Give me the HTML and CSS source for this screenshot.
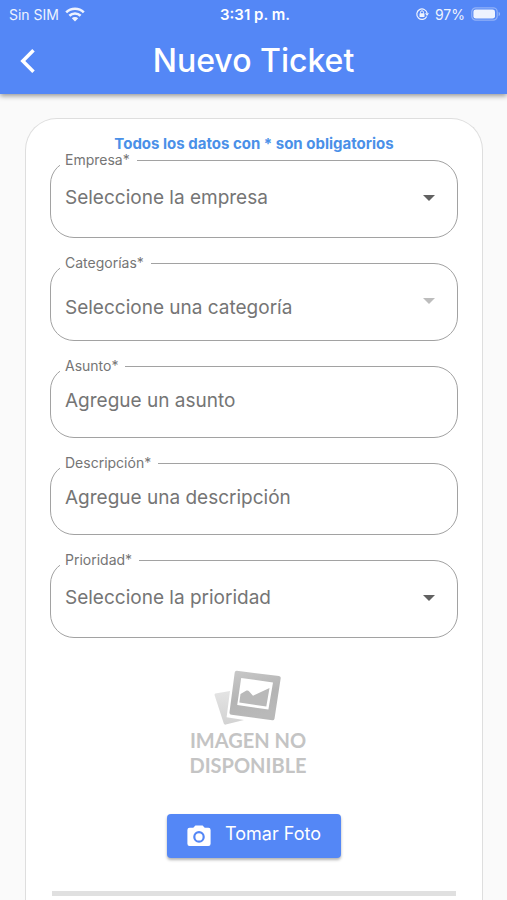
FILE: index.html
```html
<!DOCTYPE html>
<html lang="es">
<head>
<meta charset="utf-8">
<meta name="viewport" content="width=device-width, initial-scale=1">
<title>Nuevo Ticket</title>
<link rel="stylesheet" href="styles.css">
</head>
<body>
<header class="top">
  <div class="status">
    <div class="status-left">
      <span>Sin SIM</span>
      <svg class="wifi" viewBox="0 0 20 15" aria-hidden="true">
        <g fill="none" stroke="#fff" stroke-width="2.6">
          <path d="M1.200 5.400a12.600 12.600 0 0 1 17.600 0"/>
          <path d="M4.400 8.800a8 8 0 0 1 11.200 0"/>
        </g>
        <path d="M6.800 11.300a4.600 4.600 0 0 1 6.400 0L10 14.500z" fill="#fff"/>
      </svg>
    </div>
    <time class="clock">3:31 p. m.</time>
    <div class="status-right">
      <svg class="lock" viewBox="0 0 14 14" aria-hidden="true">
        <path d="M11.700 9.400a5.200 5.200 0 1 1 .4-3.200" fill="none" stroke="#fff" stroke-width="1.2"/>
        <path d="M10 6.200h4l-2 2.800z" fill="#fff"/>
        <rect x="4.500" y="6.300" width="5" height="3.800" rx=".6" fill="#fff"/>
        <path d="M5.500 6.500V5.300a1.500 1.500 0 0 1 3 0v1.200" fill="none" stroke="#fff"/>
      </svg>
      <span>97%</span>
      <svg class="battery" viewBox="0 0 30 14" aria-hidden="true">
        <rect x=".8" y=".8" width="25.400" height="12.400" rx="4" fill="none" stroke="#fff" stroke-opacity=".4" stroke-width="1.2"/>
        <rect x="2.400" y="2.400" width="21.600" height="9.200" rx="2.400" fill="#fff"/>
        <path d="M27.600 4.800c2 .8 2 3.600 0 4.400z" fill="#fff" fill-opacity=".45"/>
      </svg>
    </div>
  </div>
  <div class="appbar">
    <button class="back" type="button" aria-label="Atrás">
      <svg viewBox="0 0 16 26" aria-hidden="true"><path d="M13.500 2.200 2.800 13l10.700 10.800" fill="none" stroke="#fff" stroke-width="3.500"/></svg>
    </button>
    <h1>Nuevo Ticket</h1>
  </div>
</header>
<main>
  <form class="card">
    <p class="note">Todos los datos con * son obligatorios</p>
    <fieldset class="field">
      <legend><label for="empresa">Empresa*</label></legend>
      <div class="control tall">
        <select id="empresa"><option>Seleccione la empresa</option></select>
        <svg class="arrow" viewBox="0 0 12 6" aria-hidden="true"><path d="M0 0h12L6 6z"/></svg>
      </div>
    </fieldset>
    <fieldset class="field">
      <legend><label for="categoria">Categorías*</label></legend>
      <div class="control tall low">
        <select id="categoria" disabled><option>Seleccione una categoría</option></select>
        <svg class="arrow" viewBox="0 0 12 6" aria-hidden="true"><path d="M0 0h12L6 6z"/></svg>
      </div>
    </fieldset>
    <fieldset class="field">
      <legend><label for="asunto">Asunto*</label></legend>
      <div class="control"><input id="asunto" type="text" placeholder="Agregue un asunto"></div>
    </fieldset>
    <fieldset class="field">
      <legend><label for="descripcion">Descripción*</label></legend>
      <div class="control"><input id="descripcion" type="text" placeholder="Agregue una descripción"></div>
    </fieldset>
    <fieldset class="field">
      <legend><label for="prioridad">Prioridad*</label></legend>
      <div class="control tall">
        <select id="prioridad"><option>Seleccione la prioridad</option></select>
        <svg class="arrow" viewBox="0 0 12 6" aria-hidden="true"><path d="M0 0h12L6 6z"/></svg>
      </div>
    </fieldset>
    <figure class="empty">
      <svg viewBox="0 0 70 56" aria-hidden="true">
        <defs>
          <linearGradient id="frame" x1="0" y1="0" x2=".3" y2="1"><stop offset="0" stop-color="#c9c9c9"/><stop offset=".6" stop-color="#b4b4b4"/><stop offset="1" stop-color="#b9b9b9"/></linearGradient>
          <linearGradient id="sheet" x1="0" y1="0" x2="0" y2="1"><stop offset="0" stop-color="#e4e4e4"/><stop offset="1" stop-color="#d2d2d2"/></linearGradient>
        </defs>
        <path d="M2.400 23.500 17 21l-3.400 26.300L31 50l-18.200 4.600q-1.500.300-2-1L1.600 25.200q-.300-1.300.800-1.700z" fill="url(#sheet)"/>
        <path d="M23.800.8 66 6q2 .4 1.700 2.300l-6.200 40.400q-.400 1.700-2.200 1.500L18.500 44.800q-2.300-.4-2-2.600L21.700 2.400q.3-1.700 2.100-1.600z" fill="url(#frame)"/>
        <path d="M28.200 8 60 12.400 55.400 39.500 24.200 35z" fill="#fff"/>
        <path d="m26.300 32.600 1.200-8.600 6-3.500q1.700-.5 2.700 1l3.800 4.200L56.500 18l-3.200 18.500z" fill="#b9b9b9"/>
      </svg>
      <figcaption>IMAGEN NO<br>DISPONIBLE</figcaption>
    </figure>
    <button class="photo" type="button">
      <svg viewBox="0 0 24 22" aria-hidden="true">
        <path d="M8.400.5h7.200l2.100 2.300h3.700A2.200 2.200 0 0 1 23.600 5v13.800a2.200 2.200 0 0 1-2.200 2.200H2.600a2.200 2.200 0 0 1-2.200-2.200V5a2.200 2.200 0 0 1 2.200-2.200h3.700z" fill="#fff"/>
        <circle cx="12" cy="11.900" r="4.700" fill="#fff" stroke="#5487f6" stroke-width="2.200"/>
      </svg>
      <span>Tomar Foto</span>
    </button>
    <hr>
  </form>
</main>
</body>
</html>
```
FILE: styles.css
```css
* { box-sizing: border-box; }

body {
  margin: 0;
  background: #fafafa;
  font-family: Inter, "Liberation Sans", sans-serif;
  color: #757575;
}

.top {
  background: #5487f6;
  color: #fff;
  box-shadow: 0 2px 5px rgba(0, 0, 0, .4);
}

.status {
  display: grid;
  grid-template-columns: 1fr auto 1fr;
  align-items: center;
  height: 28px;
  padding: 0 6px 0 9px;
  font-size: 14px;
}

.status-left, .status-right {
  display: flex;
  align-items: center;
  gap: 6px;
  opacity: .9;
}

.status-right { justify-content: flex-end; }
.clock { font-weight: 600; font-size: 15px; }
.wifi { width: 20px; height: 15px; }
.lock { width: 14px; height: 14px; }
.battery { width: 30px; height: 14px; }

.appbar {
  display: grid;
  grid-template-columns: 56px 1fr 56px;
  align-items: center;
  height: 66px;
}

.back {
  display: flex;
  justify-content: center;
  padding: 8px;
  border: 0;
  background: none;
}

.back svg { width: 16px; height: 26px; }

h1 {
  margin: 0;
  text-align: center;
  font-size: 32px;
  font-weight: 500;
  line-height: 40px;
}

main { padding: 24px 24px 0 25px; }

.card {
  display: flex;
  flex-direction: column;
  padding: 18px 24px 4px;
  border: 1px solid #dedede;
  border-bottom: 0;
  border-radius: 32px 32px 0 0;
  background: #fff;
}

.note {
  margin: 0;
  text-align: center;
  font-size: 15px;
  font-weight: 700;
  line-height: 14px;
  color: #4a90e8;
}

.field {
  min-width: 0;
  margin: 0 0 16px;
  padding: 0 14px;
  border: 1px solid #a2a2a2;
  border-radius: 24px;
}

legend {
  margin-left: -5px;
  padding: 0 7px 0 5px;
  font-size: 14px;
  line-height: 18px;
}

.control {
  display: flex;
  align-items: center;
  height: 62px;
  padding-bottom: 10px;
}

.control.tall { height: 68px; }
.control.low { align-items: flex-end; padding-bottom: 18px; }
.low .arrow { margin-bottom: 18px; }

select, input {
  flex: 1;
  min-width: 0;
  height: 28px;
  padding: 0;
  border: 0;
  outline: 0;
  appearance: none;
  background: none;
  font: 19px/28px Inter, "Liberation Sans", sans-serif;
  color: #757575;
  opacity: 1;
}

select:disabled { color: #757575; opacity: 1; }
input::placeholder { color: #757575; opacity: 1; }

.arrow {
  width: 12px;
  height: 6px;
  margin-right: 8px;
  fill: #616161;
}

select:disabled + .arrow { fill: #bdbdbd; }

.empty {
  align-self: center;
  display: flex;
  flex-direction: column;
  align-items: center;
  margin: 16px 0 0;
  padding-right: 12px;
}

.empty svg { width: 70px; height: 56px; }

figcaption {
  margin-top: 2px;
  text-align: center;
  font: 700 20px/25px Lato, "Liberation Sans", sans-serif;
  color: #c4c4c4;
}

.photo {
  align-self: center;
  display: flex;
  align-items: center;
  gap: 14px;
  height: 44px;
  margin: 36px 0 33px;
  padding: 0 20px;
  border: 0;
  border-radius: 4px;
  background: #5487f6;
  box-shadow: 0 2px 3px rgba(0, 0, 0, .3);
  font: 18px/24px Inter, "Liberation Sans", sans-serif;
  color: #fff;
}

.photo svg { width: 24px; height: 22px; }
.photo span { padding-bottom: 4px; }

hr {
  width: calc(100% - 4px);
  height: 5px;
  margin: 0 2px;
  border: 0;
  background: #e0e0e0;
}
```
